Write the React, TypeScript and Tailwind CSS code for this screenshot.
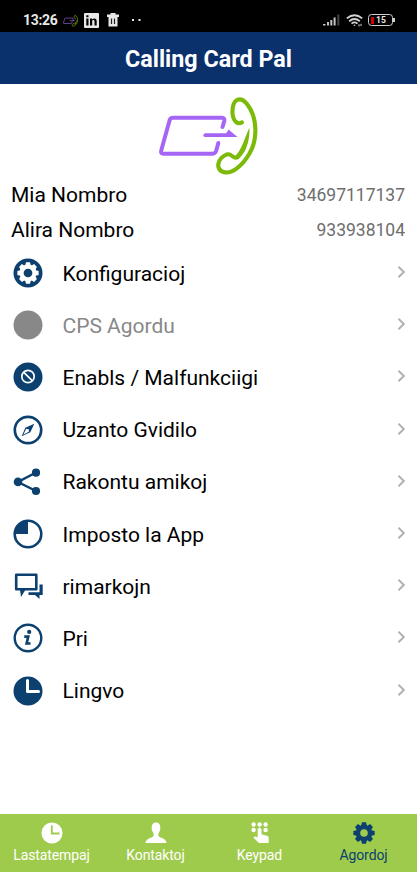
import type { ReactNode } from "react";

const TEETH = [0, 45, 90, 135, 180, 225, 270, 315];

function Gear({ hole, r }: { hole: number; r: number }) {
  return (
    <g fill="currentColor">
      {TEETH.map((a) => (
        <path key={a} d="M11.8 8 12.9 3.800h4.200l1.100 4.200z" transform={`rotate(${a} 15 15)`} />
      ))}
      <circle cx="15" cy="15" r={(r + hole) / 2} fill="none" stroke="currentColor" strokeWidth={r - hole} />
    </g>
  );
}

function Icon({ children }: { children: ReactNode }) {
  return (
    <svg viewBox="0 0 30 30" className="size-[30px] shrink-0" fill="none">
      {children}
    </svg>
  );
}

function LogoShape() {
  return (
    <>
      <g stroke="#a566f5" strokeWidth="4" strokeLinecap="round" strokeLinejoin="round" fill="none">
        <path d="M72.5 37 74.3 31Q75 27.700 72 27.700H23Q20.500 27.700 19.700 30L11.200 60.500Q10.200 63.800 13.500 63.800H62Q65.300 63.800 66.300 60.500L68.300 53" />
        <path d="M55.300 45.200H79" strokeWidth="3.800" />
      </g>
      <path d="M78.500 39.500 87.500 47.100H74z" fill="#a566f5" />
      <path
        d="M92 32.300C88 35 83 31.500 82.500 23C82 9 90 5.500 97 14C108 28 107.500 50 99.500 63.500C92 76.500 81 84.500 73.500 82C65 79 67.500 68.500 76.500 64.500C82 62.500 83 70 87.500 67.300"
        stroke="#7cba08"
        strokeWidth="4.100"
        strokeLinecap="round"
        fill="none"
      />
      <path d="M85 66C92 60 94.500 48 99.500 37.500C100 51 95.500 65 87.500 69.200z" fill="#7cba08" />
    </>
  );
}

const rows: { label: string; icon: ReactNode; disabled?: boolean }[] = [
  {
    label: "Konfiguracioj",
    icon: (
      <>
        <circle cx="15" cy="15" r="14.500" fill="currentColor" />
        <g className="text-white" transform="translate(.75 .75) scale(.95)">
          <Gear hole={4.600} r={8.900} />
        </g>
      </>
    ),
  },
  { label: "CPS Agordu", disabled: true, icon: <circle cx="15" cy="15" r="14.500" fill="currentColor" /> },
  {
    label: "Enabls / Malfunkciigi",
    icon: (
      <>
        <circle cx="15" cy="15" r="14.500" fill="currentColor" />
        <circle cx="15" cy="14.500" r="6.200" stroke="#fff" strokeWidth="1.700" />
        <path d="m10.600 10.100 8.800 8.800" stroke="#fff" strokeWidth="1.700" />
      </>
    ),
  },
  {
    label: "Uzanto Gvidilo",
    icon: (
      <>
        <circle cx="15" cy="15" r="13.200" stroke="currentColor" strokeWidth="2.700" />
        <path d="M21.300 8.700 12.300 12.700 8.700 21.300 17.300 17.300z" fill="currentColor" />
        <path d="m10.300 19.700 3-6.100 2.900 3z" fill="#fff" />
        <circle cx="15" cy="15" r="1" fill="#fff" />
      </>
    ),
  },
  {
    label: "Rakontu amikoj",
    icon: (
      <>
        <path d="M23 5.500 5 15l18 9" stroke="currentColor" strokeWidth="2.500" />
        <g fill="currentColor">
          <circle cx="23" cy="5.700" r="4.100" />
          <circle cx="5" cy="14.900" r="4.300" />
          <circle cx="23" cy="24" r="4.100" />
        </g>
      </>
    ),
  },
  {
    label: "Imposto la App",
    icon: (
      <>
        <circle cx="15" cy="15" r="13.300" stroke="currentColor" strokeWidth="2.600" />
        <path d="M15 15V2A13 13 0 0 0 2 15z" fill="currentColor" />
      </>
    ),
  },
  {
    label: "rimarkojn",
    icon: (
      <>
        <path d="M3.200 3.700H23.300V18.200H3.200z" stroke="currentColor" strokeWidth="2.600" strokeLinejoin="round" />
        <path d="M7 18.500H12.600L8 26z" fill="currentColor" />
        <path d="M26.500 13.500H29.700V24H26.500V28L22 24H15.500V21.200H26.500z" fill="currentColor" />
      </>
    ),
  },
  {
    label: "Pri",
    icon: (
      <>
        <circle cx="15" cy="15" r="13.300" stroke="currentColor" strokeWidth="2.400" />
        <circle cx="16.200" cy="8.900" r="2.100" fill="currentColor" />
        <path d="M11.300 13.600H15.300L13.600 20.500H17.500" stroke="currentColor" strokeWidth="2.600" />
      </>
    ),
  },
  {
    label: "Lingvo",
    icon: (
      <>
        <circle cx="15" cy="15" r="14.500" fill="currentColor" />
        <path d="M14.500 4.500V15.500H25.500" stroke="#fff" strokeWidth="3" strokeLinecap="round" strokeLinejoin="round" />
      </>
    ),
  },
];

const tabs: { label: string; icon: ReactNode; active?: boolean }[] = [
  {
    label: "Lastatempaj",
    icon: (
      <>
        <circle cx="11" cy="11" r="10.500" fill="currentColor" />
        <path d="M10.800 3.500V11.500H18.500" stroke="#9fcb4c" strokeWidth="1.800" />
      </>
    ),
  },
  {
    label: "Kontaktoj",
    icon: (
      <path
        d="M11 .5C14.300 .5 15.500 3 15.300 6.500C15.200 9 13.900 10.200 13.400 11.800V13.800C14 16.500 21.200 15.500 21.500 21H.5C.8 15.500 8 16.500 8.600 13.800V11.800C8.100 10.200 6.800 9 6.700 6.500C6.500 3 7.700 .5 11 .5z"
        fill="currentColor"
      />
    ),
  },
  {
    label: "Keypad",
    icon: (
      <g fill="currentColor">
        <circle cx="4.600" cy="2.500" r="2.200" />
        <circle cx="10.600" cy="2.500" r="2.200" />
        <circle cx="16.600" cy="2.500" r="2.200" />
        <circle cx="4.600" cy="8" r="2.200" />
        <circle cx="16.600" cy="8" r="2.200" />
        <path d="M8.700 7.500Q8.700 5.700 10.600 5.700T12.500 7.500V12.300L18.500 14Q19.800 14.500 19.700 16V21H10L4.300 15.500Q5.800 13.500 8.700 15.500z" />
      </g>
    ),
  },
  {
    label: "Agordoj",
    active: true,
    icon: (
      <g transform="translate(-3.250 -3.250) scale(.95)">
        <Gear hole={4} r={8.300} />
      </g>
    ),
  },
];

function StatusBar() {
  return (
    <div className="flex h-8 items-center justify-between bg-black pt-2 pr-[22px] pl-[23px] text-[#e8e8e8]">
      <div className="flex items-center">
        <span className="w-[34px] text-[14px] leading-4 font-bold tracking-[-0.3px]">13:26</span>
        <svg viewBox="8 3 100 82" className="ml-[6px] h-[13px] w-[15px]">
          <LogoShape />
        </svg>
        <svg viewBox="0 0 15 15" className="ml-[6px] size-[15px]">
          <rect width="15" height="15" rx="1" fill="currentColor" />
          <path d="M2.300 5.500H4.500V12.500H2.300zM2.300 2.300H4.500V4.300H2.300zM6 5.500H8V6.500C9.500 4.800 12.700 5 12.700 8V12.500H10.500V8.500C10.500 6.500 8.200 6.700 8.200 8.500V12.500H6z" fill="#000" />
        </svg>
        <svg viewBox="0 0 12 14" className="ml-[8px] h-[14px] w-3">
          <path d="M0 1.500H3.500V0H8.500V1.500H12V4H0zM1.500 4H10.500V13.500H1.500z" fill="currentColor" />
          <path d="M4.500 5.500V11M7.500 5.500V11" stroke="#222" strokeWidth="1.200" />
        </svg>
        <svg viewBox="0 0 10 4" className="ml-[13px] h-1 w-[10px]" fill="currentColor">
          <path d="M0 1H2V3H0zM6.500 1H8.500V3H6.500z" />
        </svg>
      </div>
      <div className="flex items-center">
        <svg viewBox="0 0 17 12" className="h-3 w-[17px]" fill="#c4c4c4">
          <path d="M0 10H2.500V11.500H0zM4 8H6V11.500H4zM7.300 6H9.300V11.500H7.300zM10.600 3.500H12.600V11.500H10.600z" />
          <path d="M14.300 .5H16.300V11.500H14.300z" fill="#444" />
        </svg>
        <svg viewBox="0 0 17 13" className="ml-[6px] h-[13px] w-[17px]" fill="none" stroke="#d4d4d4" strokeWidth="1.800">
          <path d="M.8 4.400Q8.500-2 16.200 4.400M3.200 7.200Q8.500 2.800 13.800 7.200M5.500 9.600Q8.500 7.200 11.500 9.600" />
          <circle cx="8.500" cy="11.300" r=".8" fill="#d4d4d4" stroke="none" />
          <path d="M13 10.200V12.500M15 9.800V12" strokeWidth="1" />
        </svg>
        <div className="ml-[5px] flex h-3 w-[25px] items-center rounded-[3.500px] border-[1.500px] border-[#d0d0d0] pl-[2px]">
          <span className="h-[7px] w-[3px] bg-[#d00000]" />
          <span className="pl-[2px] text-[8.500px] leading-none font-bold">15</span>
        </div>
        <span className="h-1 w-[2px] bg-[#d0d0d0]" />
      </div>
    </div>
  );
}

export default function App() {
  return (
    <div className="flex h-[872px] w-[417px] flex-col overflow-hidden bg-white font-[Roboto,sans-serif] text-black">
      <StatusBar />
      <header className="flex h-[52px] items-center justify-center bg-[#0a316c] pt-[2px]">
        <h1 className="text-[23.300px] leading-8 font-bold text-white">Calling Card Pal</h1>
      </header>

      <div className="flex h-[94px] justify-center pt-[6px] pl-[2px]">
        <svg viewBox="0 0 120 90" className="h-[90px] w-[120px]">
          <LogoShape />
        </svg>
      </div>

      <div className="-mt-px flex h-[35px] items-center justify-between pt-px pr-3 pl-[11px]">
        <span className="text-[21px] leading-7">Mia Nombro</span>
        <span className="pb-px text-[17.500px] leading-6 text-[#6e6e6e]">34697117137</span>
      </div>
      <div className="flex h-[35px] items-center justify-between pt-px pr-3 pl-[11px]">
        <span className="text-[21px] leading-7">Alira Nombro</span>
        <span className="pb-px text-[17.500px] leading-6 text-[#6e6e6e]">933938104</span>
      </div>

      <ul>
        {rows.map((row) => (
          <li
            key={row.label}
            className={`flex h-[52.200px] items-center pr-3 pl-[13px] ${row.disabled ? "text-[#888888]" : "text-[#0b406f]"}`}
          >
            <Icon>{row.icon}</Icon>
            <span className={`ml-[19.500px] flex-1 pt-px text-[21px] leading-7 ${row.disabled ? "" : "text-black"}`}>
              {row.label}
            </span>
            <svg viewBox="0 0 8 12" className="mb-[2px] h-3 w-2" fill="none" stroke="#b2b2b2" strokeWidth="2">
              <path d="m1.500 .8 5.300 5.200-5.300 5.200" />
            </svg>
          </li>
        ))}
      </ul>

      <nav className="mt-auto grid h-[58px] grid-cols-4 bg-[#9fcb4c] pr-px">
        {tabs.map((tab) => (
          <div
            key={tab.label}
            className={`flex flex-col items-center pt-2 ${tab.active ? "text-[#0b406f]" : "text-white"}`}
          >
            <svg viewBox="0 0 22 22" className="mr-px size-[22px]" fill="none">
              {tab.icon}
            </svg>
            <span className="mt-[2px] mr-px text-[14px] leading-[18px] tracking-[-0.1px]">{tab.label}</span>
          </div>
        ))}
      </nav>
    </div>
  );
}
